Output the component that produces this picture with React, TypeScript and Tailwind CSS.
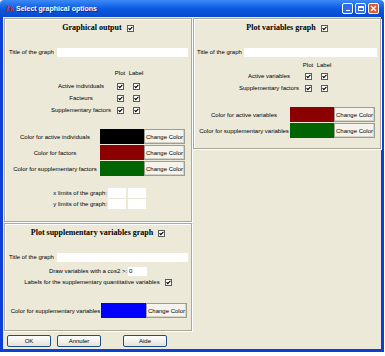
import React from 'react';

const Check: React.FC = () => (
  <svg width="7" height="7" viewBox="0 0 7 7" className="shrink-0 block">
    <rect x="0.5" y="0.5" width="6" height="6" fill="#fff" stroke="#5a5a5a" />
    <path d="M1.6 3.2 L2.8 4.6 L5.4 1.9" fill="none" stroke="#000" strokeWidth="1.1" />
  </svg>
);

const Panel: React.FC<{ className: string; children?: React.ReactNode }> = ({ className, children }) => (
  <div className={`border border-[#aca899] shadow-[inset_1px_1px_0_#fff,1px_1px_0_#fff] ${className}`}>
    {children}
  </div>
);

const Heading: React.FC<{ text: string }> = ({ text }) => (
  <div className="h-[18px] flex items-center justify-center gap-[5px]">
    <span className="font-['Liberation_Serif',serif] font-bold text-[8px] leading-none">{text}</span>
    <Check />
  </div>
);

const ColorButton: React.FC = () => (
  <div className="w-[41px] h-[15px] flex items-center justify-center bg-[#f4f3ee] border border-[#9d9d92] shadow-[inset_-1px_-1px_0_#d6d3c6]">
    Change Color
  </div>
);

const App: React.FC = () => {
  return (
    <div className="w-[385px] h-[356px] bg-white font-['Liberation_Sans',Arial,sans-serif] text-[6px] leading-none text-black">
      <div className="w-[384px] h-[352px] flex flex-col">
        {/* title bar */}
        <div className="h-[17px] shrink-0 flex items-center rounded-t-[4px] bg-linear-to-b from-[#3c8af4] via-[#0a5ae3] to-[#0749cc] pl-[5px] pr-[5px]">
          <span className="font-['Liberation_Serif',serif] italic font-bold text-[8px] text-[#e0201c] w-[10px]">Tk</span>
          <span className="ml-[1px] font-bold text-[7px] text-white [text-shadow:1px_1px_0_#0a2a8a]">Select graphical options</span>
          <div className="ml-auto flex items-center gap-[2px]">
            <div className="w-[11px] h-[11px] rounded-[2px] border border-white bg-[#2f6cf0] flex items-end justify-center pb-[2px]">
              <div className="w-[4px] h-[1.5px] bg-white" />
            </div>
            <div className="w-[11px] h-[11px] rounded-[2px] border border-white bg-[#2f6cf0] flex items-center justify-center">
              <div className="w-[6px] h-[5px] border border-white border-t-2" />
            </div>
            <div className="w-[11px] h-[11px] rounded-[2px] border border-white bg-[#e0552f] flex items-center justify-center">
              <svg width="7" height="7" viewBox="0 0 7 7">
                <path d="M1 1 L6 6 M6 1 L1 6" stroke="#fff" strokeWidth="1.4" />
              </svg>
            </div>
          </div>
        </div>

        {/* client */}
        <div className="flex-1 border-x-[3px] border-b-[3px] border-[#0b3fd8] bg-[#ece9d8] flex flex-col">
          <div className="flex pt-[1px] pl-[1px] gap-[1px]">
            <div className="w-[188px] flex flex-col">
              <Panel className="h-[204px]">
                <Heading text="Graphical output" />
                <div className="mt-[10px] h-[10px] flex items-center pl-[4px]">
                  <span className="w-[48px]">Title of the graph</span>
                  <div className="w-[131px] h-[9px] bg-white" />
                </div>
                <div className="mt-[10px] ml-[45px]">
                  <div className="h-[12px] flex items-center">
                    <span className="w-[62px]" />
                    <span className="w-[16px] text-center">Plot</span>
                    <span className="w-[16px] text-center">Label</span>
                  </div>
                  {['Active individuals', 'Facteurs', 'Supplementary factors'].map((t, i) => (
                    <div key={t} className={`h-[12px] flex items-center ${i === 0 ? 'mt-[1px]' : ''}`}>
                      <span className="w-[62px] text-center whitespace-nowrap">{t}</span>
                      <span className="w-[16px] flex justify-center"><Check /></span>
                      <span className="w-[16px] flex justify-center"><Check /></span>
                    </div>
                  ))}
                </div>
                <div className="mt-[13px] ml-[5px] flex flex-col gap-[1px]">
                  {[
                    ['Color for active individuals', 'bg-black'],
                    ['Color for factors', 'bg-[#8b0000]'],
                    ['Color for supplementary factors', 'bg-[#006400]'],
                  ].map(([t, c]) => (
                    <div key={t} className="h-[15px] flex items-center">
                      <span className="w-[90px] text-center whitespace-nowrap">{t}</span>
                      <div className={`w-[44px] h-[15px] ${c}`} />
                      <ColorButton />
                    </div>
                  ))}
                </div>
                <div className="mt-[12px] ml-[47px] flex flex-col gap-[1px]">
                  {['x limits of the graph:', 'y limits of the graph:'].map((t) => (
                    <div key={t} className="h-[10px] flex items-center">
                      <span className="w-[56px] text-right pr-[1px] whitespace-nowrap">{t}</span>
                      <div className="w-[18px] h-[10px] bg-white" />
                      <div className="ml-[2px] w-[18px] h-[10px] bg-white" />
                    </div>
                  ))}
                </div>
              </Panel>

              <Panel className="h-[108px] mt-[1px]">
                <Heading text="Plot supplementary variables graph" />
                <div className="mt-[10px] h-[10px] flex items-center pl-[4px]">
                  <span className="w-[48px]">Title of the graph</span>
                  <div className="w-[131px] h-[9px] bg-white" />
                </div>
                <div className="mt-[4px] h-[10px] flex items-center justify-center">
                  <span>Draw variables with a cos2 &gt;:</span>
                  <div className="ml-[1px] w-[19px] h-[9px] bg-white flex items-center pl-[1px]">0</div>
                </div>
                <div className="mt-[1px] h-[10px] flex items-center justify-center">
                  <span>Labels for the supplementary quantitative variables</span>
                  <span className="ml-[5px]"><Check /></span>
                </div>
                <div className="mt-[16px] ml-[5px] h-[15px] flex items-center">
                  <span className="w-[91px] text-center whitespace-nowrap">Color for supplementary variables</span>
                  <div className="w-[45px] h-[15px] bg-[#0000ff]" />
                  <ColorButton />
                </div>
              </Panel>
            </div>

            <Panel className="w-[188px] h-[131px]">
              <Heading text="Plot variables graph" />
              <div className="mt-[10px] h-[10px] flex items-center pl-[3px]">
                <span className="w-[47px]">Title of the graph</span>
                <div className="w-[133px] h-[9px] bg-white" />
              </div>
              <div className="mt-[3px] ml-[44px]">
                <div className="h-[10px] flex items-center">
                  <span className="w-[62px]" />
                  <span className="w-[16px] text-center">Plot</span>
                  <span className="w-[16px] text-center">Label</span>
                </div>
                {['Active variables', 'Supplementary factors'].map((t) => (
                  <div key={t} className="h-[12px] flex items-center">
                    <span className="w-[62px] text-center whitespace-nowrap">{t}</span>
                    <span className="w-[16px] flex justify-center"><Check /></span>
                    <span className="w-[16px] flex justify-center"><Check /></span>
                  </div>
                ))}
              </div>
              <div className="mt-[13px] ml-[4px] flex flex-col gap-[1px]">
                {[
                  ['Color for active variables', 'bg-[#8b0000]'],
                  ['Color for supplementary variables', 'bg-[#006400]'],
                ].map(([t, c]) => (
                  <div key={t} className="h-[15px] flex items-center">
                    <span className="w-[92px] text-center whitespace-nowrap">{t}</span>
                    <div className={`w-[44px] h-[15px] ${c}`} />
                    <ColorButton />
                  </div>
                ))}
              </div>
            </Panel>
          </div>

          <div className="mt-[4px] pl-[4px] flex items-center">
            {['OK', 'Annuler', 'Aide'].map((t, i) => (
              <div
                key={t}
                className={`w-[44px] h-[12px] flex items-center justify-center rounded-[2px] border border-[#1c4f86] bg-linear-to-b from-white to-[#e6e3d6] ${i === 1 ? 'ml-[6px]' : i === 2 ? 'ml-[22px]' : ''}`}
              >
                {t}
              </div>
            ))}
          </div>
        </div>
      </div>
    </div>
  );
};

export default App;
